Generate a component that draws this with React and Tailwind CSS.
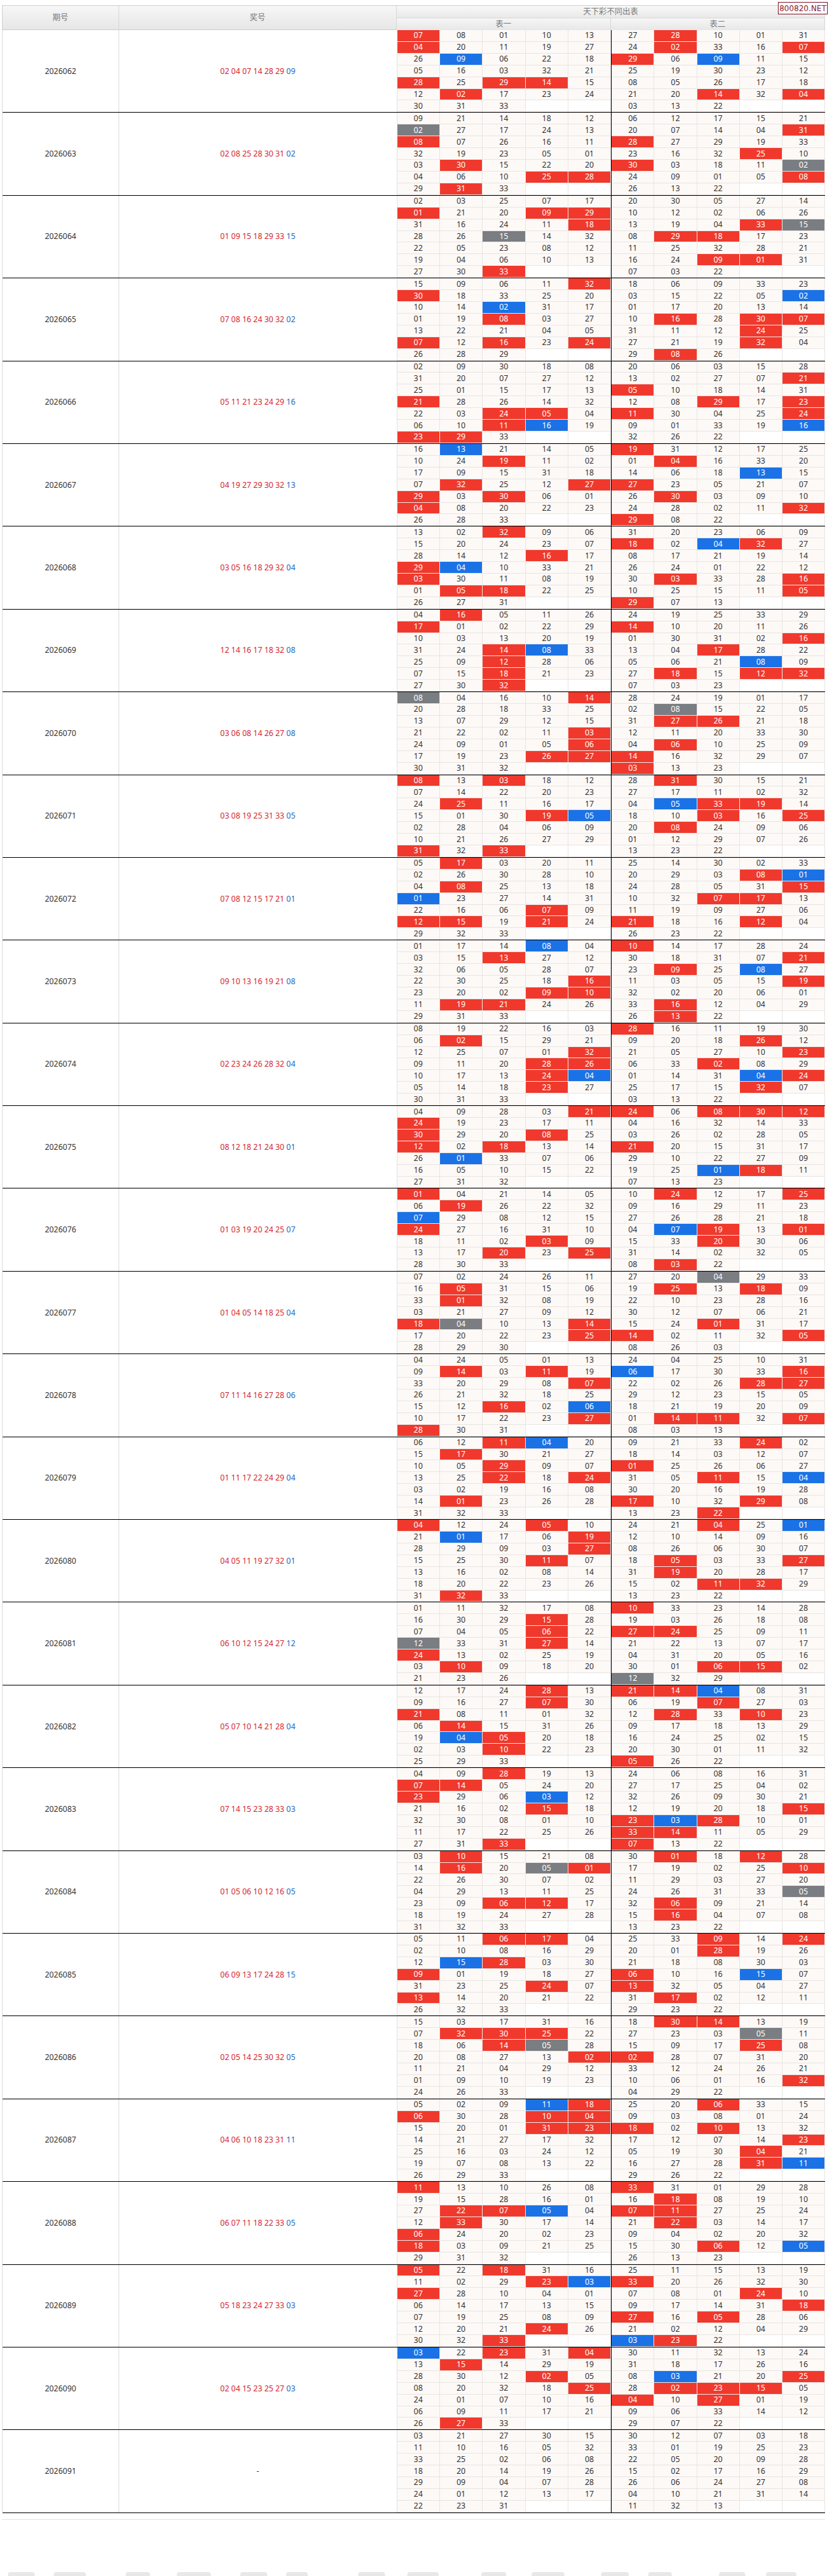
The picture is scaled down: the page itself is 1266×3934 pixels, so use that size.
import React from "react";

// period, red balls, blue ball, 表一 (33), 表二 (33)
const rows = [
  ["2026062", "02 04 07 14 28 29", "09", "07 08 01 10 13 04 20 11 19 27 26 09 06 22 18 05 16 03 32 21 28 25 29 14 15 12 02 17 23 24 30 31 33", "27 28 10 01 31 24 02 33 16 07 29 06 09 11 15 25 19 30 23 12 08 05 26 17 18 21 20 14 32 04 03 13 22"],
  ["2026063", "02 08 25 28 30 31", "02", "09 21 14 18 12 02 27 17 24 13 08 07 26 16 11 32 19 23 05 01 03 30 15 22 20 04 06 10 25 28 29 31 33", "06 12 17 15 21 20 07 14 04 31 28 27 29 19 33 23 16 32 25 10 30 03 18 11 02 24 09 01 05 08 26 13 22"],
  ["2026064", "01 09 15 18 29 33", "15", "02 03 25 07 17 01 21 20 09 29 31 16 24 11 18 28 26 15 14 32 22 05 23 08 12 19 04 06 10 13 27 30 33", "20 30 05 27 14 10 12 02 06 26 13 19 04 33 15 08 29 18 17 23 11 25 32 28 21 16 24 09 01 31 07 03 22"],
  ["2026065", "07 08 16 24 30 32", "02", "15 09 06 11 32 30 18 33 25 20 10 14 02 31 17 01 19 08 03 27 13 22 21 04 05 07 12 16 23 24 26 28 29", "18 06 09 33 23 03 15 22 05 02 01 17 20 13 14 10 16 28 30 07 31 11 12 24 25 27 21 19 32 04 29 08 26"],
  ["2026066", "05 11 21 23 24 29", "16", "02 09 30 18 08 31 20 07 27 12 25 01 15 17 13 21 28 26 14 32 22 03 24 05 04 06 10 11 16 19 23 29 33", "20 06 03 15 28 13 02 27 07 21 05 10 18 14 31 12 08 29 17 23 11 30 04 25 24 09 01 33 19 16 32 26 22"],
  ["2026067", "04 19 27 29 30 32", "13", "16 13 21 14 05 10 24 19 11 02 17 09 15 31 18 07 32 25 12 27 29 03 30 06 01 04 08 20 22 23 26 28 33", "19 31 12 17 25 01 04 16 33 20 14 06 18 13 15 27 23 05 21 07 26 30 03 09 10 24 28 02 11 32 29 08 22"],
  ["2026068", "03 05 16 18 29 32", "04", "13 02 32 09 06 15 20 24 23 07 28 14 12 16 17 29 04 10 33 21 03 30 11 08 19 01 05 18 22 25 26 27 31", "31 20 23 06 09 18 02 04 32 27 08 17 21 19 14 26 24 01 22 12 30 03 33 28 16 10 25 15 11 05 29 07 13"],
  ["2026069", "12 14 16 17 18 32", "08", "04 16 05 11 26 17 01 02 22 29 10 03 13 20 19 31 24 14 08 33 25 09 12 28 06 07 15 18 21 23 27 30 32", "24 19 25 33 29 14 10 20 11 26 01 30 31 02 16 13 04 17 28 22 05 06 21 08 09 27 18 15 12 32 07 03 23"],
  ["2026070", "03 06 08 14 26 27", "08", "08 04 16 10 14 20 28 18 33 25 13 07 29 12 15 21 22 02 11 03 24 09 01 05 06 17 19 23 26 27 30 31 32", "28 24 19 01 17 02 08 15 22 05 31 27 26 21 18 12 11 20 33 30 04 06 10 25 09 14 16 32 29 07 03 13 23"],
  ["2026071", "03 08 19 25 31 33", "05", "08 13 03 18 12 07 14 22 20 23 24 25 11 16 17 15 01 30 19 05 02 28 04 06 09 10 21 26 27 29 31 32 33", "28 31 30 15 21 27 17 11 02 32 04 05 33 19 14 18 10 03 16 25 20 08 24 09 06 01 12 29 07 26 13 23 22"],
  ["2026072", "07 08 12 15 17 21", "01", "05 17 03 20 11 02 26 30 28 10 04 08 25 13 18 01 23 27 14 31 22 16 06 07 09 12 15 19 21 24 29 32 33", "25 14 30 02 33 20 29 03 08 01 24 28 05 31 15 10 32 07 17 13 11 19 09 27 06 21 18 16 12 04 26 23 22"],
  ["2026073", "09 10 13 16 19 21", "08", "01 17 14 08 04 03 15 13 27 12 32 06 05 28 07 22 30 25 18 16 23 20 02 09 10 11 19 21 24 26 29 31 33", "10 14 17 28 24 30 18 31 07 21 23 09 25 08 27 11 03 05 15 19 32 02 20 06 01 33 16 12 04 29 26 13 22"],
  ["2026074", "02 23 24 26 28 32", "04", "08 19 22 16 03 06 02 15 29 21 12 25 07 01 32 09 11 20 28 26 10 17 13 24 04 05 14 18 23 27 30 31 33", "28 16 11 19 30 09 20 18 26 12 21 05 27 10 23 06 33 02 08 29 01 14 31 04 24 25 17 15 32 07 03 13 22"],
  ["2026075", "08 12 18 21 24 30", "01", "04 09 28 03 21 24 19 23 17 11 30 29 20 08 25 12 02 18 13 14 26 01 33 07 06 16 05 10 15 22 27 31 32", "24 06 08 30 12 04 16 32 14 33 03 26 02 28 05 21 20 15 31 17 29 10 22 27 09 19 25 01 18 11 07 13 23"],
  ["2026076", "01 03 19 20 24 25", "07", "01 04 21 14 05 06 19 26 22 32 07 29 08 12 15 24 27 16 31 10 18 11 02 03 09 13 17 20 23 25 28 30 33", "10 24 12 17 25 09 16 29 11 23 27 26 28 21 18 04 07 19 13 01 15 33 20 30 06 31 14 02 32 05 08 03 22"],
  ["2026077", "01 04 05 14 18 25", "04", "07 02 24 26 11 16 05 31 15 06 33 01 32 08 19 03 21 27 09 12 18 04 10 13 14 17 20 22 23 25 28 29 30", "27 20 04 29 33 19 25 13 18 09 22 10 23 28 16 30 12 07 06 21 15 24 01 31 17 14 02 11 32 05 08 26 03"],
  ["2026078", "07 11 14 16 27 28", "06", "04 24 05 01 13 09 14 03 11 19 33 20 29 08 07 26 21 32 18 25 15 12 16 02 06 10 17 22 23 27 28 30 31", "24 04 25 10 31 06 17 30 33 16 22 02 26 28 27 29 12 23 15 05 18 21 19 20 09 01 14 11 32 07 08 03 13"],
  ["2026079", "01 11 17 22 24 29", "04", "06 12 11 04 20 15 17 30 21 27 10 05 29 09 07 13 25 22 18 24 03 02 19 16 08 14 01 23 26 28 31 32 33", "09 21 33 24 02 18 14 03 12 07 01 25 26 06 27 31 05 11 15 04 30 20 16 19 28 17 10 32 29 08 13 23 22"],
  ["2026080", "04 05 11 19 27 32", "01", "04 12 24 05 10 21 01 17 06 19 28 29 09 03 27 15 25 30 11 07 13 16 02 08 14 18 20 22 23 26 31 32 33", "24 21 04 25 01 12 10 14 09 16 08 26 06 30 07 18 05 03 33 27 31 19 20 28 17 15 02 11 32 29 13 23 22"],
  ["2026081", "06 10 12 15 24 27", "12", "01 11 32 17 08 16 30 29 15 28 07 04 05 06 22 12 33 31 27 14 24 13 02 25 19 03 10 09 18 20 21 23 26", "10 33 23 14 28 19 03 26 18 08 27 24 25 09 11 21 22 13 07 17 04 31 20 05 16 30 01 06 15 02 12 32 29"],
  ["2026082", "05 07 10 14 21 28", "04", "12 17 24 28 13 09 16 27 07 30 21 08 11 01 32 06 14 15 31 26 19 04 05 20 18 02 03 10 22 23 25 29 33", "21 14 04 08 31 06 19 07 27 03 12 28 33 10 23 09 17 18 13 29 16 24 25 02 15 20 30 01 11 32 05 26 22"],
  ["2026083", "07 14 15 23 28 33", "03", "04 09 28 19 13 07 14 05 24 20 23 29 06 03 12 21 16 02 15 18 32 30 08 01 10 11 17 22 25 26 27 31 33", "24 06 08 16 31 27 17 25 04 02 32 26 09 30 21 12 19 20 18 15 23 03 28 10 01 33 14 11 05 29 07 13 22"],
  ["2026084", "01 05 06 10 12 16", "05", "03 10 15 21 08 14 16 20 05 01 22 26 30 07 02 04 29 13 11 25 23 09 06 12 17 18 19 24 27 28 31 32 33", "30 01 18 12 28 17 19 02 25 10 11 29 03 27 20 24 26 31 33 05 32 06 09 21 14 15 16 04 07 08 13 23 22"],
  ["2026085", "06 09 13 17 24 28", "15", "05 11 06 17 04 02 10 08 16 29 12 15 28 03 30 09 01 19 18 27 31 23 25 24 07 13 14 20 21 22 26 32 33", "25 33 09 14 24 20 01 28 19 26 21 18 08 30 03 06 10 16 15 07 13 32 05 04 27 31 17 02 12 11 29 23 22"],
  ["2026086", "02 05 14 25 30 32", "05", "15 03 17 31 16 07 32 30 25 22 18 06 14 05 28 20 08 27 13 02 11 21 04 29 12 01 09 10 19 23 24 26 33", "18 30 14 13 19 27 23 03 05 11 15 09 17 25 08 02 28 07 31 20 33 12 24 26 21 10 06 01 16 32 04 29 22"],
  ["2026087", "04 06 10 18 23 31", "11", "05 02 09 11 18 06 30 28 10 04 15 20 01 31 23 14 21 27 17 32 25 16 03 24 12 19 07 08 13 22 26 29 33", "25 20 06 33 15 09 03 08 01 24 18 02 10 13 32 17 12 07 14 23 05 19 30 04 21 16 27 28 31 11 29 26 22"],
  ["2026088", "06 07 11 18 22 33", "05", "11 13 10 26 08 19 15 28 16 01 27 22 07 05 04 12 33 30 17 14 06 24 20 02 23 18 03 09 21 25 29 31 32", "33 31 01 29 28 16 18 08 19 10 07 11 27 25 24 21 22 03 14 17 09 04 02 20 32 15 30 06 12 05 26 13 23"],
  ["2026089", "05 18 23 24 27 33", "03", "05 22 18 31 16 11 02 29 23 03 27 28 10 04 01 06 14 17 13 15 07 19 25 08 09 12 20 21 24 26 30 32 33", "25 11 15 13 19 33 20 26 32 30 07 08 01 24 10 09 17 14 31 18 27 16 05 28 06 21 02 12 04 29 03 23 22"],
  ["2026090", "02 04 15 23 25 27", "03", "03 22 23 31 04 13 15 14 29 19 28 30 12 02 05 08 20 32 18 25 24 01 07 10 16 06 09 11 17 21 26 27 33", "30 11 32 13 24 31 18 17 26 16 08 03 21 20 25 28 02 23 15 05 04 10 27 01 19 09 06 33 14 12 29 07 22"],
  ["2026091", "", "", "03 21 27 30 15 11 10 16 05 32 33 25 02 06 08 18 20 14 19 26 29 09 04 07 28 24 01 12 13 17 22 23 31", "30 12 07 03 18 33 01 19 25 23 22 05 20 09 28 15 02 17 16 29 26 06 24 27 08 04 10 21 31 14 11 32 13"],
];

const font = "font-['Noto_Sans','Noto_Sans_CJK_SC',sans-serif]";

function Cell({ n, reds, blue }) {
  const isRed = reds.includes(n);
  const isBlue = n === blue;
  let tone = "bg-[#fdf9f7] text-[#333]";
  if (n === "") tone = "bg-white";
  else if (isRed && isBlue) tone = "bg-[#7a7d81] text-white";
  else if (isRed) tone = "bg-[#f0392c] text-white";
  else if (isBlue) tone = "bg-[#1a72e6] text-white";
  return (
    <div className={`flex items-center justify-center border-r border-b border-[#e9e5e3] text-[12px] leading-none ${tone}`}>
      {n}
    </div>
  );
}

function Board({ nums, reds, blue, divider }) {
  const list = nums.split(" ").concat(["", ""]);
  return (
    <div
      className={`grid grid-cols-5 grid-rows-7 w-[327px] ${
        divider ? "border-l border-black" : ""
      }`}>
      {list.map((n, i) => (
        <Cell key={i} n={n} reds={reds} blue={blue} />
      ))}
    </div>
  );
}

function Period({ row }) {
  const [issue, redStr, blue, t1, t2] = row;
  const reds = redStr ? redStr.split(" ") : [];
  return (
    <div className="flex h-[126.4px] border-b border-black">
      <div className="w-[178px] border-r border-[#dcdcdc] flex items-center justify-center text-[12px] text-[#333]">
        {issue}
      </div>
      <div className="w-[425px] border-r border-[#e3e3e3] flex items-center justify-center text-[12px]">
        {redStr ? (
          <span>
            <span className="text-[#d6262e]">{redStr}</span>{" "}
            <span className="text-[#2068c2]">{blue}</span>
          </span>
        ) : (
          <span className="text-[#333]">-</span>
        )}
      </div>
      <Board nums={t1} reds={reds} blue={blue} />
      <Board nums={t2} reds={reds} blue={blue} divider />
    </div>
  );
}

// tops of the footer links, cut off by the bottom edge
const footer = [
  [12, 41], [82, 49], [192, 37], [270, 52], [367, 41], [437, 33],
  [547, 41], [622, 48], [735, 38], [812, 50], [918, 42], [990, 36],
  [1098, 40], [1170, 46],
];

export default function App() {
  return (
    <div className={`relative h-[3934px] w-[1266px] overflow-hidden bg-white ${font}`}>
      <div className="absolute top-[3px] left-[1188px] w-[76px] h-[19px] border border-[#7d1b2a] bg-white flex items-center justify-center text-[13px] text-[#8a1a2b] font-['Liberation_Sans_Narrow','DejaVu_Sans_Condensed',sans-serif] z-10">
        800820.NET
      </div>

      <div className="pt-2 ml-[3px] w-[1257px]">
        <div className="flex h-[38px] border-t border-b border-[#cfcfcf] border-l text-[12px] text-[#7a7a7a]">
          <div className="w-[178px] flex items-center justify-center border-r border-[#d8d8d8] bg-linear-to-b from-[#f7f7f7] to-[#e6e6e6]">
            期号
          </div>
          <div className="w-[425px] flex items-center justify-center border-r border-[#d8d8d8] bg-linear-to-b from-[#f7f7f7] to-[#e6e6e6]">
            奖号
          </div>
          <div className="w-[654px] flex flex-col border-r border-[#d8d8d8]">
            <div className="h-[19px] flex items-center justify-center border-b border-[#d6d6d6] bg-linear-to-b from-[#f8f8f8] to-[#e9e9e9]">
              天下彩不同出表
            </div>
            <div className="flex-1 flex bg-linear-to-b from-[#f6f6f6] to-[#e7e7e7]">
              <div className="w-[327px] flex items-center justify-center border-r border-[#d6d6d6]">
                表一
              </div>
              <div className="w-[327px] flex items-center justify-center">表二</div>
            </div>
          </div>
        </div>

        <div className="border-l border-[#dcdcdc]">
          {rows.map((row) => (
            <Period key={row[0]} row={row} />
          ))}
        </div>

        <div className="mt-[9px] h-px bg-[#e3e3e3]" />
      </div>

      <div className="absolute left-0 top-[3928px] w-full h-[6px]">
        {footer.map(([x, w], i) => (
          <div
            key={i}
            className="absolute top-0 h-[6px] rounded-t-sm bg-[#e8e8e8]"
            style={{ left: x, width: w }}
          />
        ))}
      </div>
    </div>
  );
}
